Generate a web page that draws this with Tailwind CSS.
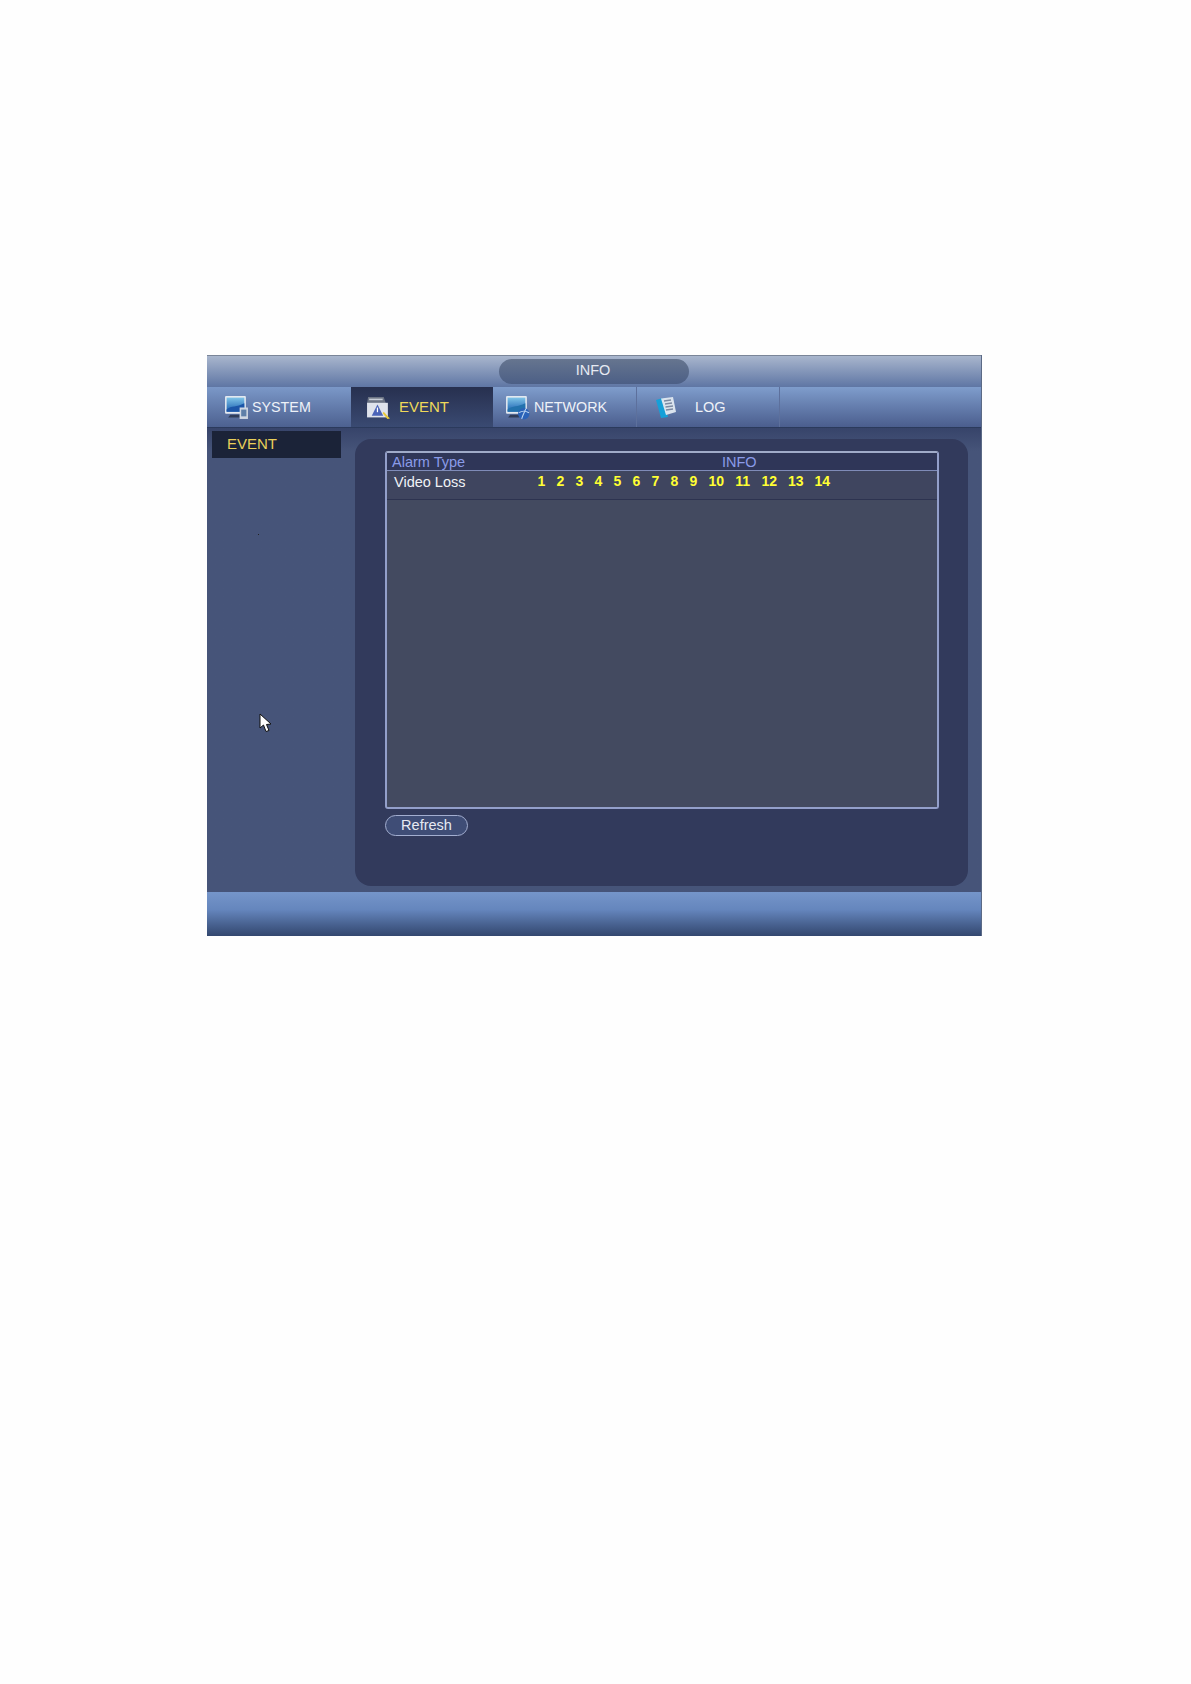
<!DOCTYPE html>
<html lang="en">
<head>
<meta charset="UTF-8">
<script src="https://cdn.jsdelivr.net/npm/@tailwindcss/browser@4"></script>
<title>INFO</title>
</head>
<body class="bg-[#fefefe] font-['Liberation_Sans',Arial,sans-serif]">
<div class="h-[1684px] pt-[355px] pl-[207px]">
	<div class="relative w-[775px] h-[581px] flex flex-col bg-[#465479] border-r border-[#5b6a86]">

		<!-- title -->
		<div class="h-[32px] shrink-0 border-t border-[#7a8598] bg-gradient-to-b from-[#a9b6cd] to-[#5f76a4] pl-[292px] pt-[3px]">
			<div class="w-[190px] h-[25px] pr-[2px] pb-[1px] rounded-full bg-gradient-to-b from-[#66758f] to-[#4c5f86] flex items-center justify-center text-[14.500px] text-[#e6eaf2]">INFO</div>
		</div>

		<!-- tabs -->
		<div class="h-[41px] shrink-0 flex bg-gradient-to-b from-[#7f9dcc] to-[#4b5e8e] border-b border-[#2b3a5c]">
			<div class="w-[144px] flex items-center pl-[17px] gap-[3px] pt-[1px] text-[14.300px] text-[#eef2f8] bg-gradient-to-b from-[#7b98c8] to-[#4d6190]">
				<svg class="w-[25px] h-[25px]" viewBox="0 0 24 24">
					<defs>
						<linearGradient id="scr" x1="0" y1="0" x2="0" y2="1">
							<stop offset="0" stop-color="#7fc4e8"/>
							<stop offset="1" stop-color="#1a5fb0"/>
						</linearGradient>
					</defs>
					<rect x="1" y="1" width="20" height="17" rx="1" fill="#e3e9f0"/>
					<rect x="2.500" y="2.500" width="17" height="13.500" fill="url(#scr)"/>
					<path d="M2.500 14C7 10 12 12 19.500 8V16H2.500Z" fill="#1c56a8"/>
					<path d="M6 19H15V21.500H4Z" fill="#2f3c58"/>
					<rect x="15" y="12" width="8" height="11" fill="#cfd7e2"/>
					<rect x="16.500" y="14" width="5" height="6.500" fill="#5e7fa8"/>
				</svg>
				<span>SYSTEM</span>
			</div>
			<div class="w-[142px] flex items-center pl-[15px] gap-[8px] pt-[1px] text-[15px] text-[#efd95a] bg-gradient-to-b from-[#27304f] to-[#3a4a72]">
				<svg class="w-[25px] h-[25px]" viewBox="0 0 24 24">
					<path d="M2 2H17L19 8H1Z" fill="#6c7484"/>
					<path d="M3 3.500H16V5H3Z" fill="#c8ced8"/>
					<rect x="1" y="7.500" width="20" height="14" fill="#dfe3ec"/>
					<path d="M11 9L16.500 20H5.500Z" fill="#4a63b8"/>
					<rect x="10.400" y="12" width="1.200" height="4.500" fill="#ffffff"/>
					<path d="M17 16L23 22.500L20.500 23L16 17.500Z" fill="#e8c93a"/>
				</svg>
				<span>EVENT</span>
			</div>
			<div class="w-[144px] flex items-center pl-[12px] gap-[4px] pt-[1px] text-[14.300px] text-[#eef2f8] border-r border-[#5d709c]">
				<svg class="w-[25px] h-[25px]" viewBox="0 0 24 24">
					<rect x="1" y="1" width="20" height="17" rx="1" fill="#e3e9f0"/>
					<rect x="2.500" y="2.500" width="17" height="13.500" fill="url(#scr)"/>
					<path d="M2.500 14C7 10 12 12 19.500 8V16H2.500Z" fill="#2372ad"/>
					<path d="M5 19H14V21.500H3Z" fill="#2f3c58"/>
					<circle cx="18" cy="18" r="5.500" fill="#2a62b8"/>
					<path d="M13.500 17C16 15 20 15 23 17M16 23C17 19 19 16 20 13" fill="none" stroke="#bcd6f2" stroke-width="1"/>
				</svg>
				<span>NETWORK</span>
			</div>
			<div class="w-[143px] flex items-center pl-[18px] gap-[18px] pt-[1px] text-[14.500px] text-[#eef2f8] border-r border-[#5d709c]">
				<svg class="w-[22px] h-[22px]" viewBox="0 0 22 22">
					<path d="M1 3L8 1L13 20L6 21Z" fill="#16a0d8"/>
					<path d="M6 1.500L18 0L21 15L11 18Z" fill="#dbe4ee"/>
					<path d="M9 4L16 3M10 7L17 6M10.500 10L18 9M11 13L18 12" stroke="#7c8aa2" stroke-width="1.300"/>
				</svg>
				<span>LOG</span>
			</div>
		</div>

		<!-- body -->
		<div class="flex-1 flex bg-gradient-to-b from-[#37446a] via-[#465479] via-[5%] to-[#465479]">
			<div class="w-[148px] shrink-0 pl-[5px] pt-[3px]">
				<div class="w-[129px] h-[27px] bg-[#1b2338] pl-[15px] flex items-center text-[15px] text-[#e9cf5a]">EVENT</div>
			</div>
			<div class="w-[613px] h-[447px] mt-[11px] rounded-[16px] bg-[#323a5c] pl-[30px] pt-[12px]">
				<div class="w-[554px] h-[358px] rounded-[3px] border-2 border-[#939fca] border-t-[#a0abc9] bg-[#434a60]">
					<div class="h-[18px] pt-[1px] flex bg-[#2f3658] border-b border-[#7f8bb8] text-[14.500px] leading-[16px] text-[#8a9be8]">
						<span class="w-[335px] pl-[5px]">Alarm Type</span>
						<span>INFO</span>
					</div>
					<div class="h-[29px] flex border-b border-[#2d3350] bg-[#3f455f] pt-[1px]">
						<span class="w-[145px] pl-[7px] text-[14.500px] leading-[20px] text-[#f0f2f6]">Video Loss</span>
						<div class="flex text-[14px] leading-[18px] font-bold text-[#ffff33]">
							<span class="w-[19px] text-center">1</span>
							<span class="w-[19px] text-center">2</span>
							<span class="w-[19px] text-center">3</span>
							<span class="w-[19px] text-center">4</span>
							<span class="w-[19px] text-center">5</span>
							<span class="w-[19px] text-center">6</span>
							<span class="w-[19px] text-center">7</span>
							<span class="w-[19px] text-center">8</span>
							<span class="w-[19px] text-center">9</span>
							<span class="w-[26.500px] text-center">10</span>
							<span class="w-[26.500px] text-center">11</span>
							<span class="w-[26.500px] text-center">12</span>
							<span class="w-[26.500px] text-center">13</span>
							<span class="w-[26.500px] text-center">14</span>
						</div>
					</div>
				</div>
				<div class="mt-[6px] w-[83px] h-[21px] rounded-full border border-[#a3aed0] bg-[#3f4d76] flex items-center justify-center text-[14.500px] text-[#e6eaf2]">Refresh</div>
			</div>
		</div>

		<!-- footer -->
		<div class="h-[44px] shrink-0 bg-gradient-to-b from-[#7595c9] via-[#6586bd] via-[40%] to-[#33476f]"></div>

		<!-- mouse cursor and stray pixel -->
		<svg class="absolute left-[52px] top-[358px] w-[14px] h-[20px]" viewBox="0 0 14 20">
			<path d="M1 1V15L4.500 12L7 18.500L10 17.500L7.500 11.500L12 11Z" fill="#ffffff" stroke="#111111" stroke-width="1"/>
		</svg>
		<div class="absolute left-[51px] top-[179px] w-[1px] h-[1px] bg-[#222222]"></div>
	</div>
</div>
</body>
</html>
